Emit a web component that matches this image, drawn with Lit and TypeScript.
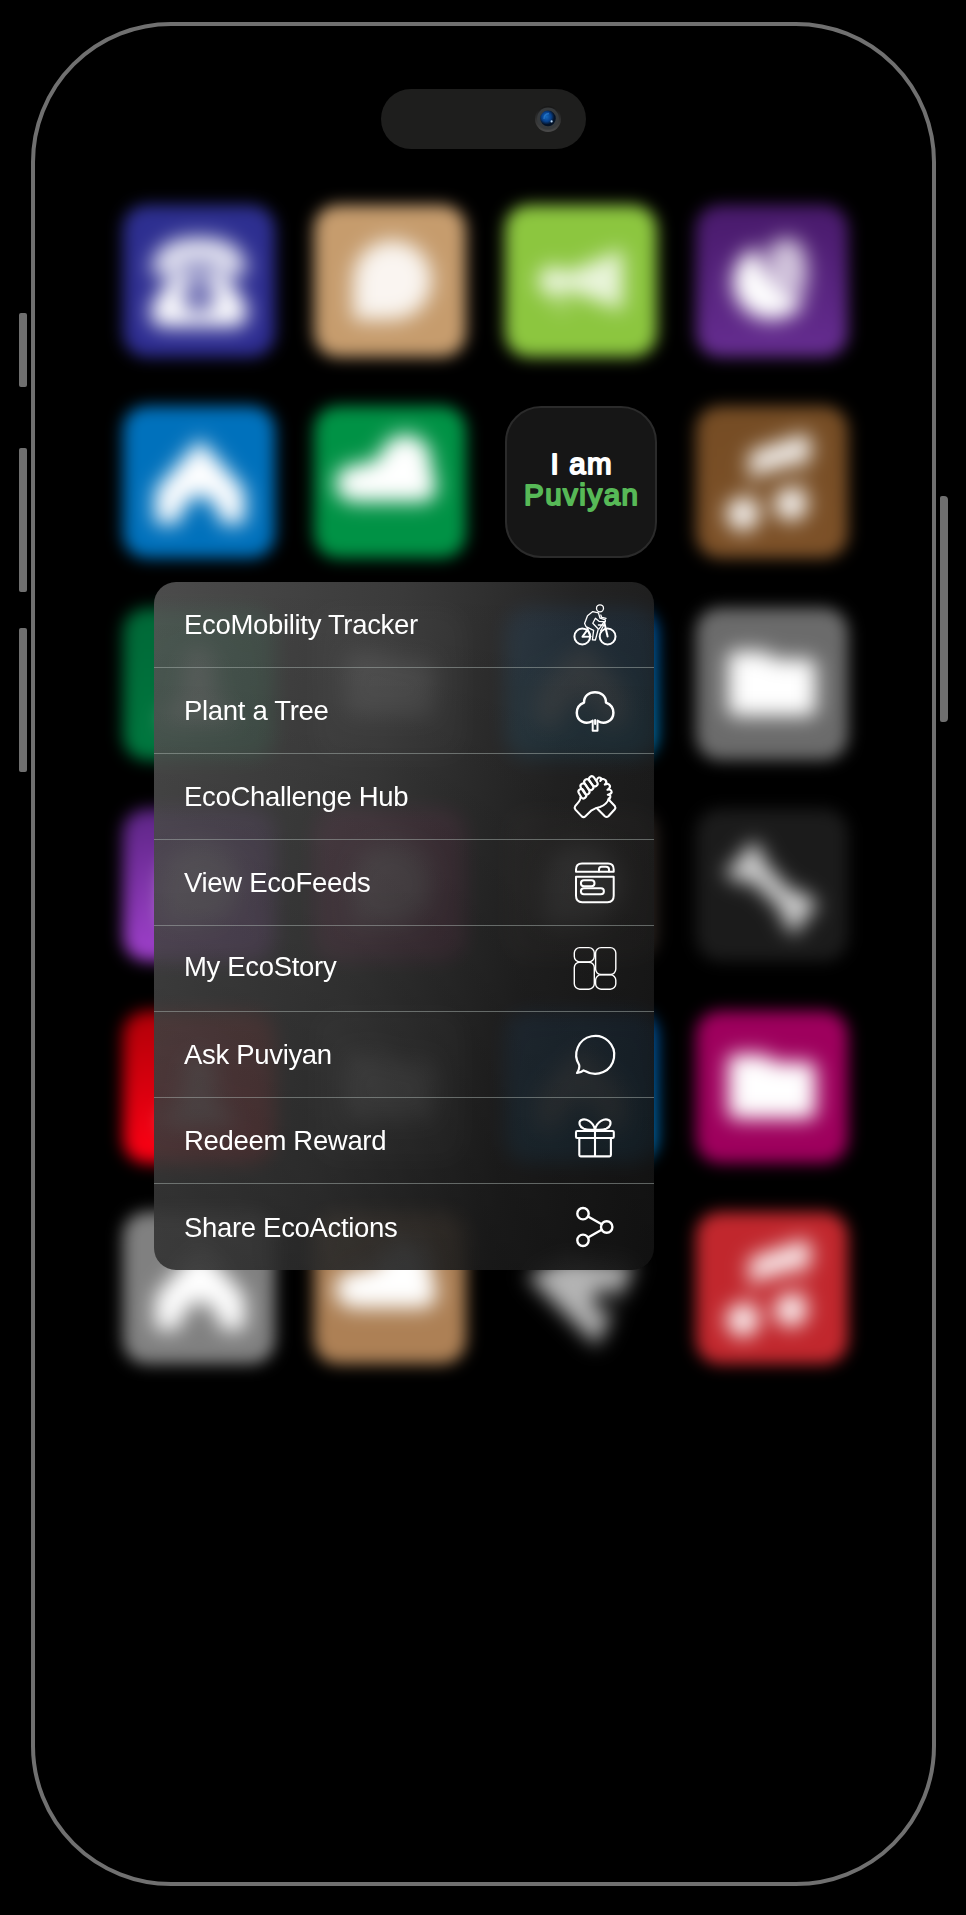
import { LitElement, html, svg, css } from "lit";
import { customElement } from "lit/decorators.js";

const house = svg`<path d="M77 33 L122 84 V118 H98 Q92 90 77 90 Q62 90 56 118 H32 V84 Z"/>`;
const cloud = svg`<path d="M42 96 a18 18 0 0 1 -4 -37 q18 -1 28 -9 a26 27 0 0 1 51 0 q-1 10 4 22 q5 20 -10 24 Z"/>`;
const music = svg`<path opacity=".9" d="M53 46 L106 28 q9 0 9 6 v20 L53 71 Z"/><circle opacity=".92" cx="47" cy="108" r="17"/><circle opacity=".92" cx="95" cy="98" r="17"/><path opacity=".2" d="M54 62h7v42h-7zM104 48h7v48h-7z"/>`;
const folder = svg`<path d="M32 50 q0 -7 7 -7 h30 l10 8 h34 q7 0 7 7 v43 q0 7 -7 7 h-74 q-7 0 -7 -7 Z"/>`;
const person = svg`<path d="M76 34 L94 60 L88 78 L116 116 H36 L64 78 L58 60 Z"/>`;
const phone = svg`<path opacity=".88" d="M28 70 Q28 32 76 32 Q124 32 124 70 H97 Q98 57 76 57 Q54 57 55 70 Z"/><path fill-rule="evenodd" d="M52 68 H100 L123 98 Q128 122 112 122 H40 Q24 122 29 98 Z M76 72 q-14 0 -16 20 q0 16 16 16 q16 0 16 -16 q-2 -20 -16 -20 Z"/><path opacity=".3" d="M60 50h32v60h-32z"/>`;
const bubble = svg`<path opacity=".9" d="M78 35 a40 40 0 1 1 0 80 H42 Q39 115 39 112 V78 A40 40 0 0 1 78 35 Z"/>`;
const network = svg`<g opacity=".82"><circle cx="48" cy="76" r="15"/><path d="M60 68 L118 44 V106 L60 84 Z"/></g><path opacity=".2" d="M38 68h24l4 40h-16z"/>`;
const pie = svg`<path d="M60 42 L74 76 L108 98 A39 38 0 1 1 60 42 Z"/><path opacity=".74" d="M72 42 Q88 28 102 36 Q118 54 108 92 L74 76 Z"/>`;
const bone = svg`<path fill="#d2d2d2" d="M60 33 q8 10 7 18 L95 82 q14 -2 26 14 q-2 9 -12 11 q-2 14 -12 18 q-12 -12 -12 -24 L55 72 q-14 4 -26 -8 q4 -10 14 -11 q2 -14 17 -20 Z"/>`;
const plane = svg`<path fill="#b4b4b4" d="M22 64 L60 46 L130 52 L92 134 Z"/><circle cx="101" cy="89" r="12" fill="#111"/>`;

type Tile = { bg: string; glyph: unknown; faint?: boolean };
const tile = (bg: string, glyph: unknown, faint = false): Tile => ({ bg, glyph, faint });

const tiles: (Tile | null)[] = [
  tile("linear-gradient(#2d2f90,#2e2d92)", phone),
  tile("#c69c6d", bubble),
  tile("#8cc63f", network),
  tile("linear-gradient(#47196a,#662d91)", pie),
  tile("#0071bc", house),
  tile("#009245", cloud),
  null,
  tile("linear-gradient(#754c24,#7d5128)", music),
  tile("linear-gradient(#006837,#00783f)", person, true),
  tile("#262626", folder, true),
  tile("linear-gradient(#0058a8,#007bb5)", house, true),
  tile("#6b6b6b", folder),
  tile("linear-gradient(#5c2585,#a040cc)", bubble, true),
  tile("#7d1048", bubble, true),
  tile("#2b2420", bubble, true),
  tile("#1b1b1b", bone),
  tile("linear-gradient(#b00008,#ff0014)", person, true),
  tile("#262626", folder, true),
  tile("linear-gradient(#0058a8,#0071b5)", house, true),
  tile("#9e005d", folder),
  tile("#808080", house),
  tile("#ad8055", cloud),
  tile("#000", plane),
  tile("#c1272d", music),
];

const finger = (x: number, y: number, r: number, l = 11) =>
  svg`<rect x=${x - 2.7} y=${y - l / 2} width="5.4" height=${l} rx="2.7" transform="rotate(${r} ${x} ${y})"/>`;

const items = [
  { label: "EcoMobility Tracker", w: 1.3, icon: svg`
    <g stroke-width="2"><circle cx="9.3" cy="33.5" r="7.9"/><circle cx="34.6" cy="33.5" r="7.9"/>
    <path d="M9.5 33.8 L16.8 33.4 M9.5 33.5 L14.8 26.3 M14.2 25 L17.4 33.5 M31.2 19 L34.6 33.5"/></g>
    <circle cx="27" cy="5.3" r="3.5"/>
    <path d="M19.8 8.6 L14.5 12.8 L11.6 20.6 L13 23.6 L20.6 27.4 L19.4 36.8 L22.4 37 L25.3 26 L19.8 20.2 L22.4 15.3 L26 18.3 L32.3 18.8 L32.4 16.8 L27 15.2 L25.4 9.8 Z"/>
    <path d="M27.8 12 L29 15 M28 14.2 L33 15.4 M26 26 L31 18.8 M25.4 22 L31 21.8 L27.5 28"/>` },
  { label: "Plant a Tree", w: 2.5, icon: svg`
    <path d="M19 32.2 C13 35.8 3.8 32.6 3.8 23.8 C3.8 18.6 6.8 15.2 11 13.6 C11 6.8 16 3.3 22 3.3 S33 6.8 33 13.6 C37.4 15.2 40.4 18.6 40.4 23.8 C40.4 32.6 31 35.8 25.2 32.2"/>
    <path d="M19.7 31.5 V41.8 H24.5 V31.5 M22.1 31 v4" stroke-width="2"/>` },
  { label: "EcoChallenge Hub", w: 2.1, icon: svg`
    ${finger(20.3, 6.3, -35, 11)}${finger(15.8, 9.6, -35, 12)}${finger(12, 14, -33, 12)}${finger(9.3, 18.7, -30, 10)}
    <path d="M7.4 22.4 C8 25 4.8 27.8 2.2 31.2 Q1 33 2.4 34.6 L8.8 41.4 Q10.6 43 12.4 41.2 L18.6 35.3 Q23 32.6 27 32 Q34 29.5 36.2 23"/>
    <path d="M23.7 5 Q25.6 .8 28.4 3.6 L27.3 6 Q29.6 2.4 32.6 5.2 Q34.4 7.3 31.8 9.6 Q35.6 7.6 37 10.8 Q37.4 13 34.4 14.8 Q38.4 13.8 38.7 17 Q38.4 19 34.8 19.7 Q39 20 36.5 24"/>
    <path d="M35.4 24.2 L41.8 31 Q43 32.8 41.8 34.2 L35.4 41.2 Q33.6 42.8 31.8 41.2 L23.6 33"/>` },
  { label: "View EcoFeeds", w: 2, icon: svg`
    <path d="M3 10.7 V8.4 Q3 2.5 9 2.5 H35 Q40.7 2.5 40.7 8.4 V10.7 Z"/>
    <path d="M26 10.4 V8.2 Q26 5.7 28.5 5.7 H33 Q36 5.7 36 8.4 V10.4"/>
    <path d="M3 15.8 H40.7 V34.8 Q40.7 41.2 34.6 41.2 H9.2 Q3 41.2 3 34.8 Z"/>
    <rect x="7.9" y="19.2" width="13.6" height="6" rx="3"/><rect x="7.9" y="27.3" width="23" height="6" rx="3"/>` },
  { label: "My EcoStory", w: 1.4, raised: true, icon: svg`
    <rect x="1.3" y=".6" width="20" height="14.3" rx="5.4"/><rect x="1.3" y="15.2" width="20" height="27" rx="5.4"/>
    <rect x="22.6" y=".6" width="20.2" height="26.9" rx="5.4"/><rect x="22.6" y="27.8" width="20.2" height="14.4" rx="5.4"/>` },
  { label: "Ask Puviyan", w: 2.2, icon: svg`
    <path d="M12.6 38.2 A19 19 0 1 0 6.2 32 Q6.9 35.4 4 40 Q8.6 39.2 10.6 37.4 Z"/>` },
  { label: "Redeem Reward", w: 2.1, icon: svg`
    <rect x="3" y="12" width="37.8" height="7" rx="1.2"/><path d="M6.3 19 V36 Q6.3 37.4 7.7 37.4 H36.5 Q37.9 37.4 37.9 36 V19 M22 11 V37"/>
    <path d="M22 10.6 C20 2.5 12.5 -1.2 8 1.2 C5.2 3.2 6.4 8 10.8 9.8 C14.5 11.2 19 10.8 22 10.6 C24 2.5 31.5 -1.2 36 1.2 C38.8 3.2 37.6 8 33.2 9.8 C29.5 11.2 25 10.8 22 10.6 Z"/>` },
  { label: "Share EcoActions", w: 2.4, icon: svg`
    <circle cx="10" cy="8.7" r="5.7"/><circle cx="33.7" cy="22" r="5.7"/><circle cx="10" cy="35.3" r="5.7"/>
    <path d="M15 11.5 L28.7 19.2 M15 32.5 L28.7 24.8"/>` },
];

@customElement("context-menu")
class ContextMenu extends LitElement {
  static styles = css`
    :host {
      display: block;
      height: 688px;
      border-radius: 22px;
      overflow: hidden;
      color: #fff;
      font: 27.5px/32px "Liberation Sans", Arial, sans-serif;
      letter-spacing: -0.32px;
      background:
        linear-gradient(rgba(0, 0, 0, 0), rgba(0, 0, 0, 0.32)),
        linear-gradient(98deg, rgba(86, 86, 86, 0.88), rgba(66, 66, 66, 0.88) 42%, rgba(40, 40, 40, 0.88) 72%, rgba(28, 28, 28, 0.88));
      backdrop-filter: blur(6px);
    }
    .item {
      display: flex;
      align-items: center;
      justify-content: space-between;
      box-sizing: border-box;
      height: 86px;
      padding: 0 37px 0 30px;
      border-bottom: 1px solid rgba(170, 180, 175, 0.5);
    }
    .item:last-child {
      border-bottom: none;
    }
    .label {
      padding-top: 1px;
    }
    .raised {
      padding: 0 0 3px;
    }
    svg {
      width: 44px;
      height: 44px;
      overflow: visible;
      fill: none;
      stroke: #fff;
      stroke-linecap: round;
      stroke-linejoin: round;
    }
  `;
  render() {
    return items.map(
      (i) => html`<div class="item">
        <span class="label ${i.raised ? "raised" : ""}">${i.label}</span>
        <svg viewBox="0 0 44 44" stroke-width=${i.w}>${i.icon}</svg>
      </div>`
    );
  }
}

@customElement("app-root")
class AppRoot extends LitElement {
  static styles = css`
    :host {
      display: grid;
      grid-template-columns: 8px 905px 8px;
      column-gap: 4px;
      box-sizing: border-box;
      height: 1915px;
      padding: 22px 0 29px 19px;
      overflow: hidden;
      background: #000;
    }
    .rail {
      display: flex;
      flex-direction: column;
    }
    .rail.left {
      padding-top: 291px;
    }
    .rail.right {
      padding-top: 474px;
    }
    .key {
      height: 144px;
      margin-bottom: 36px;
      border-radius: 2px;
      background: #6f6f6f;
    }
    .key.mute {
      height: 74px;
      margin-bottom: 61px;
    }
    .key.power {
      height: 226px;
      border-radius: 2px 4px 4px 2px;
    }
    .phone {
      position: relative;
      box-sizing: border-box;
      border: 4px solid #707070;
      border-radius: 140px;
      display: flex;
      flex-direction: column;
    }
    .island {
      display: flex;
      align-items: center;
      justify-content: flex-end;
      box-sizing: border-box;
      width: 205px;
      height: 60px;
      margin: 62.5px 0 0 346px;
      padding: 0 24px 0 0;
      border-radius: 30px;
      background: #1e1e1d;
    }
    .island svg {
      width: 28px;
      height: 28px;
    }
    .grid {
      display: grid;
      grid-template-columns: repeat(4, 152px);
      grid-auto-rows: 152px;
      column-gap: 39px;
      row-gap: 49.4px;
      margin: 56.5px 0 0 88px;
    }
    .tile {
      border-radius: 24px;
      filter: blur(8px);
    }
    .tile svg {
      display: block;
      fill: #fff;
      filter: blur(6.5px);
    }
    .tile.faint svg {
      opacity: 0.6;
    }
    .app {
      box-sizing: border-box;
      border: 2px solid #2b2b2b;
      border-radius: 36px;
      background: #161616;
    }
    .app svg {
      display: block;
      font: 29.5px "Liberation Sans", Arial, sans-serif;
      stroke-width: 1.9px;
      stroke-linejoin: round;
    }
    .white {
      fill: #fff;
      stroke: #fff;
    }
    .green {
      fill: #57b957;
      stroke: #57b957;
    }
    context-menu {
      position: absolute;
      left: 119px;
      top: 556px;
      width: 500px;
    }
  `;
  render() {
    return html`
      <div class="rail left">
        <div class="key mute"></div>
        <div class="key"></div>
        <div class="key"></div>
      </div>
      <div class="phone">
        <div class="island">
          <svg viewBox="0 0 28 28">
            <defs>
              <radialGradient id="lens" cx=".4" cy=".4"><stop offset="0" stop-color="#1769bd" /><stop offset=".6" stop-color="#08408a" /><stop offset="1" stop-color="#041226" /></radialGradient>
              <linearGradient id="ring" x2="0" y2="1"><stop offset="0" stop-color="#161616" /><stop offset="1" stop-color="#4a4a4a" /></linearGradient>
            </defs>
            <circle cx="14" cy="14" r="13" fill="url(#ring)" />
            <circle cx="14" cy="13.6" r="11" fill="#373a3c" />
            <circle cx="14" cy="13.4" r="7.8" fill="url(#lens)" />
            <path d="M10 14 Q10 9 15 8.5" fill="none" stroke="#2f83d8" stroke-width="1.4" opacity=".6" />
            <circle cx="17.6" cy="16.4" r="1.1" fill="#b8d8f5" />
          </svg>
        </div>
        <div class="grid">
          ${tiles.map((t) =>
            t
              ? html`<div class="tile ${t.faint ? "faint" : ""}" style="background:${t.bg}">
                  <svg viewBox="0 0 152 152">${t.glyph}</svg>
                </div>`
              : html`<div class="app">
                  <svg width="148" height="148" viewBox="2 2 148 148">
                    <text class="white" x="76" y="67.5" text-anchor="middle" textLength="61">I am</text>
                    <text class="green" x="76" y="98.5" text-anchor="middle" textLength="114">Puviyan</text>
                  </svg>
                </div>`
          )}
        </div>
        <context-menu></context-menu>
      </div>
      <div class="rail right"><div class="key power"></div></div>
    `;
  }
}
